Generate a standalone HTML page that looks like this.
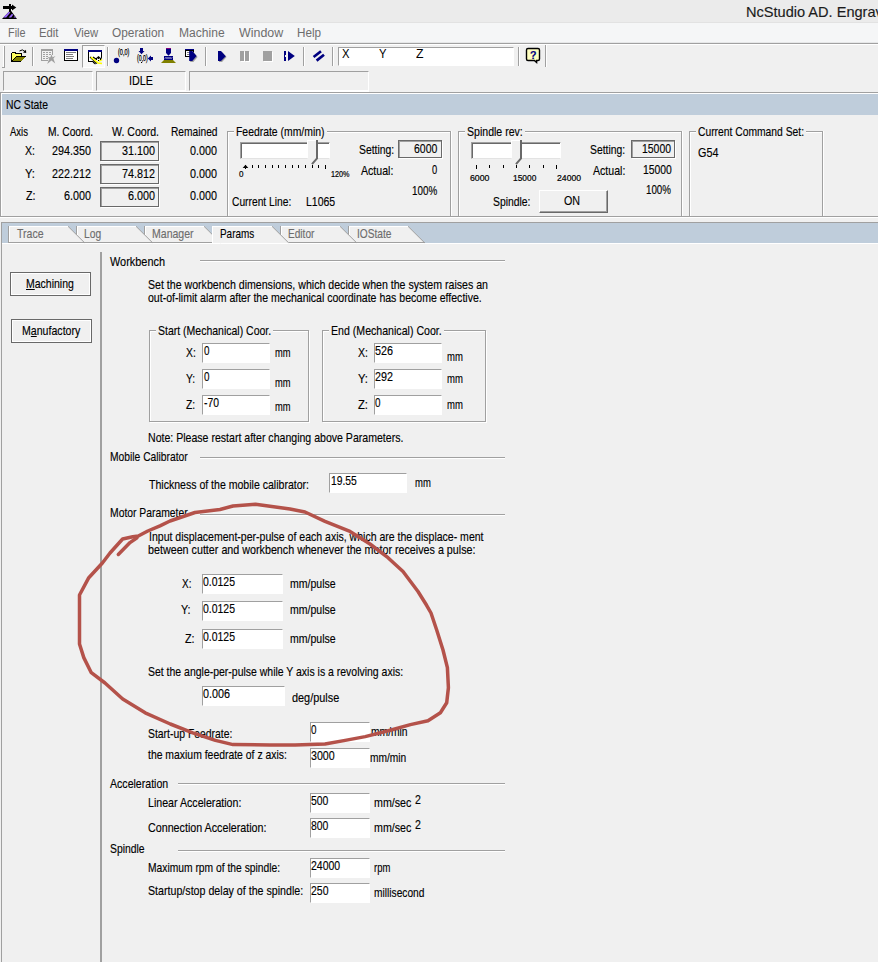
<!DOCTYPE html>
<html lang="en"><head><meta charset="utf-8"><title>NcStudio AD. Engraving</title>
<style>
html,body{margin:0;padding:0;}
body{background:#f0f0f0;width:878px;height:962px;overflow:hidden;font-family:"Liberation Sans",sans-serif;}
#app{position:relative;width:878px;height:962px;overflow:hidden;background:#f0f0f0;}
#app div,#app svg{position:absolute;box-sizing:border-box;}
.t{-webkit-text-stroke:0.15px currentColor;position:absolute;white-space:pre;line-height:1;font-size:13px;color:#000;transform-origin:0 0;display:block;}
.t u{text-decoration:underline;text-underline-offset:1px;}
.titlebar{background:#ebebeb;}
.menubar{background:#f5f6f7;}
.bar{background:#bfcddb;}
.g{background:#a0a0a0;}
.w{background:#fff;}
.sunk{border:1px solid;border-color:#a0a0a0 #fff #fff #a0a0a0;}
.edit{background:#fff;border:1px solid;border-color:#a0a0a0 #fff #fff #a0a0a0;}
.track{background:#fff;border:1px solid;border-color:#a0a0a0 #fff #e3e3e3 #a0a0a0;box-shadow:inset 1px 1px 0 #696969;}
.ro{border:1px solid #696969;box-shadow:1px 1px 0 #fff, inset 1px 1px 0 #a0a0a0;}
.btn{border:1px solid;border-color:#fff #696969 #696969 #fff;box-shadow:inset -1px -1px 0 #a0a0a0;}
.fbtn{border:1px solid #696969;box-shadow:inset 0 0 0 1px #fff;}
.grp{border:1px solid #a0a0a0;box-shadow:1px 1px 0 #fff, inset 1px 1px 0 #fff;}
.lblbg{background:#f0f0f0;}
.tab{background:#f0f0f0;}
.b{font-weight:bold;}
.sm{-webkit-text-stroke:0.2px #000;}
.px{-webkit-text-stroke:0.25px #000;}
.thin{-webkit-text-stroke:0;}

</style></head>
<body>
<div id="app">
<div class="titlebar" style="left:0px;top:0px;width:878px;height:22px;"></div>
<div class="menubar" style="left:0px;top:22px;width:878px;height:21px;"></div>
<div class="" style="left:0px;top:22px;width:878px;height:1px;background:#e2e2e2"></div>
<div class="" style="left:0px;top:42px;width:878px;height:1px;background:#e6e7e8"></div>
<div class="g" style="left:0px;top:43px;width:878px;height:1px;"></div>
<div class="w" style="left:0px;top:44px;width:878px;height:1px;"></div>
<div class="w" style="left:3px;top:46px;width:1px;height:21px;"></div>
<div class="g" style="left:4px;top:46px;width:1px;height:21px;"></div>
<div class="g" style="left:2px;top:67px;width:3px;height:1px;"></div>
<div class="g" style="left:32px;top:47px;width:1px;height:19px;"></div>
<div class="w" style="left:33px;top:47px;width:1px;height:19px;"></div>
<div class="g" style="left:107px;top:47px;width:1px;height:19px;"></div>
<div class="w" style="left:108px;top:47px;width:1px;height:19px;"></div>
<div class="g" style="left:205px;top:47px;width:1px;height:19px;"></div>
<div class="w" style="left:206px;top:47px;width:1px;height:19px;"></div>
<div class="g" style="left:303px;top:47px;width:1px;height:19px;"></div>
<div class="w" style="left:304px;top:47px;width:1px;height:19px;"></div>
<div class="g" style="left:332px;top:47px;width:1px;height:19px;"></div>
<div class="w" style="left:333px;top:47px;width:1px;height:19px;"></div>
<div class="g" style="left:518px;top:47px;width:1px;height:19px;"></div>
<div class="w" style="left:519px;top:47px;width:1px;height:19px;"></div>
<div class="g" style="left:545px;top:45px;width:1px;height:22px;"></div>
<div class="w" style="left:546px;top:45px;width:1px;height:22px;"></div>
<div class="" style="left:82px;top:45px;width:23px;height:23px;background:#f8f8f8;border:1px solid;border-color:#a0a0a0 #fff #fff #a0a0a0;"></div>
<div class="edit" style="left:338px;top:47px;width:176px;height:19px;"></div>
<div class="sunk" style="left:3px;top:71px;width:90px;height:20px;"></div>
<div class="sunk" style="left:96px;top:71px;width:90px;height:20px;"></div>
<div class="sunk" style="left:189px;top:71px;width:180px;height:20px;"></div>
<div class="w" style="left:3px;top:91px;width:366px;height:1px;"></div>
<div class="g" style="left:0px;top:92px;width:878px;height:1px;"></div>
<div class="w" style="left:1px;top:93px;width:878px;height:1px;"></div>
<div class="g" style="left:0px;top:92px;width:1px;height:125px;"></div>
<div class="w" style="left:1px;top:93px;width:1px;height:123px;"></div>
<div class="bar" style="left:2px;top:94px;width:876px;height:21px;"></div>
<div class="g" style="left:0px;top:216px;width:878px;height:1px;"></div>
<div class="w" style="left:0px;top:217px;width:878px;height:1px;"></div>
<div class="ro" style="left:100px;top:141px;width:59px;height:20px;"></div>
<div class="ro" style="left:100px;top:164px;width:59px;height:20px;"></div>
<div class="ro" style="left:100px;top:187px;width:59px;height:20px;"></div>
<div class="grp" style="left:227px;top:131px;width:224px;height:85px;border-bottom:none;box-shadow:1px 0 0 #fff, inset 1px 1px 0 #fff;"></div>
<div class="lblbg" style="left:234px;top:131px;width:92.5px;height:2px;"></div>
<div class="track" style="left:240px;top:142px;width:90px;height:17px;"></div>
<div class="ro" style="left:398px;top:140px;width:44px;height:18px;"></div>
<div class="grp" style="left:458px;top:131px;width:224px;height:85px;border-bottom:none;box-shadow:1px 0 0 #fff, inset 1px 1px 0 #fff;"></div>
<div class="lblbg" style="left:465.2px;top:131px;width:59.80000000000001px;height:2px;"></div>
<div class="track" style="left:471px;top:142px;width:90px;height:17px;"></div>
<div class="btn" style="left:539px;top:190px;width:69px;height:23px;"></div>
<div class="ro" style="left:631px;top:140px;width:44px;height:18px;"></div>
<div class="grp" style="left:689px;top:131px;width:134px;height:85px;border-bottom:none;box-shadow:1px 0 0 #fff, inset 1px 1px 0 #fff;"></div>
<div class="lblbg" style="left:695.6px;top:131px;width:110.0px;height:2px;"></div>
<div class="g" style="left:1px;top:222px;width:878px;height:1px;"></div>
<div class="g" style="left:1px;top:222px;width:1px;height:740px;"></div>
<div class="bar" style="left:2px;top:223px;width:876px;height:20px;"></div>
<div class="w" style="left:2px;top:243px;width:876px;height:1px;"></div>
<div class="g" style="left:100px;top:252px;width:2px;height:710px;"></div>
<div class="fbtn" style="left:10px;top:272px;width:81px;height:24px;"></div>
<div class="fbtn" style="left:11px;top:319px;width:81px;height:24px;"></div>
<div class="g" style="left:200px;top:260px;width:305px;height:1px;"></div>
<div class="w" style="left:200px;top:261px;width:305px;height:1px;"></div>
<div class="grp" style="left:149px;top:330px;width:160px;height:92px;"></div>
<div class="lblbg" style="left:156px;top:330px;width:117.19999999999999px;height:2px;"></div>
<div class="grp" style="left:322px;top:330px;width:164px;height:92px;"></div>
<div class="lblbg" style="left:329px;top:330px;width:114.69999999999999px;height:2px;"></div>
<div class="edit" style="left:202px;top:343px;width:68px;height:20px;"></div>
<div class="edit" style="left:202px;top:369px;width:68px;height:20px;"></div>
<div class="edit" style="left:202px;top:395px;width:68px;height:20px;"></div>
<div class="edit" style="left:374px;top:343px;width:68px;height:20px;"></div>
<div class="edit" style="left:374px;top:369px;width:68px;height:20px;"></div>
<div class="edit" style="left:374px;top:395px;width:68px;height:20px;"></div>
<div class="g" style="left:200px;top:457px;width:305px;height:1px;"></div>
<div class="w" style="left:200px;top:458px;width:305px;height:1px;"></div>
<div class="edit" style="left:329px;top:473px;width:78px;height:20px;"></div>
<div class="g" style="left:200px;top:514px;width:305px;height:1px;"></div>
<div class="w" style="left:200px;top:515px;width:305px;height:1px;"></div>
<div class="edit" style="left:202px;top:574px;width:81px;height:20px;"></div>
<div class="edit" style="left:202px;top:601px;width:81px;height:20px;"></div>
<div class="edit" style="left:202px;top:629px;width:81px;height:20px;"></div>
<div class="edit" style="left:202px;top:686px;width:83px;height:20px;"></div>
<div class="edit" style="left:310px;top:722px;width:60px;height:20px;"></div>
<div class="edit" style="left:310px;top:748px;width:60px;height:20px;"></div>
<div class="g" style="left:178px;top:783px;width:327px;height:1px;"></div>
<div class="w" style="left:178px;top:784px;width:327px;height:1px;"></div>
<div class="edit" style="left:310px;top:793px;width:60px;height:20px;"></div>
<div class="edit" style="left:310px;top:818px;width:60px;height:20px;"></div>
<div class="g" style="left:178px;top:850px;width:327px;height:1px;"></div>
<div class="w" style="left:178px;top:851px;width:327px;height:1px;"></div>
<div class="edit" style="left:310px;top:858px;width:60px;height:20px;"></div>
<div class="edit" style="left:310px;top:883px;width:60px;height:20px;"></div>
<svg width="878" height="962" viewBox="0 0 878 962" style="left:0;top:0;pointer-events:none">
<g shape-rendering="crispEdges">
<g id="appicon"><rect x="3" y="6" width="10" height="3" fill="#000"/><polygon points="12,4.5 16.3,7.5 12,10.5" fill="#000" shape-rendering="auto"/><rect x="9" y="4" width="2" height="8" fill="#000"/><polygon points="2,19 9.5,11 11.2,11 17,19" fill="#000" shape-rendering="auto"/><polygon points="3.2,17.6 9,11.8 10.3,12.4 6.2,17.6" fill="#9966ff" shape-rendering="auto"/><polygon points="8.6,17.6 12,13.8 13.2,14.8 11.2,17.6" fill="#9966ff" shape-rendering="auto"/><polygon points="13.6,17.6 14.9,16 16,17.6" fill="#9966ff" shape-rendering="auto"/></g>
<g id="ic-open"><polygon points="11,62 11,53 12,52 15,52 16,53 22,53 22,56 26,56 21,62" fill="#000"/><polygon points="12,61 12,53.2 15,53.2 16,54.2 21,54.2 21,56 16,56" fill="#ffff60"/><polygon points="13,61 16.2,57 25,57 21,61" fill="#808000"/><path d="M19.5,51 Q22.5,48.5 25,51.5" fill="none" stroke="#000" stroke-width="1" shape-rendering="auto"/><polygon points="23,52.5 26.2,53 26,49.8" fill="#000" shape-rendering="auto"/></g>
<g id="ic-grid"><rect x="41" y="49" width="12" height="2" fill="#a0a0a0"/><rect x="41" y="49" width="1" height="12" fill="#a0a0a0"/><rect x="52" y="49" width="1" height="6" fill="#a0a0a0"/><rect x="41" y="60" width="7" height="1" fill="#a0a0a0"/><rect x="43" y="52" width="2" height="1" fill="#a0a0a0"/><rect x="46" y="52" width="2" height="1" fill="#a0a0a0"/><rect x="49" y="52" width="2" height="1" fill="#a0a0a0"/><rect x="43" y="54" width="2" height="1" fill="#a0a0a0"/><rect x="46" y="54" width="2" height="1" fill="#a0a0a0"/><rect x="49" y="54" width="2" height="1" fill="#a0a0a0"/><rect x="43" y="56" width="2" height="1" fill="#a0a0a0"/><rect x="46" y="56" width="2" height="1" fill="#a0a0a0"/><rect x="43" y="58" width="2" height="1" fill="#a0a0a0"/><rect x="46" y="58" width="2" height="1" fill="#a0a0a0"/><polygon points="51.5,54.5 52.6,57.2 55.5,56 53.4,58.6 55.2,63.5 51.5,60.6 47.2,64 49.2,58.8 47.5,57.2 50.4,57.2" fill="#a0a0a0" shape-rendering="auto"/></g>
<g id="ic-win"><rect x="64" y="49" width="14" height="12" fill="#000"/><rect x="65" y="51" width="12" height="9" fill="#fff"/><rect x="64" y="49" width="14" height="2" fill="#000080"/><rect x="66" y="52" width="10" height="1" fill="#808080"/><rect x="66" y="54" width="7" height="1" fill="#808080"/><rect x="66" y="56" width="8" height="1" fill="#808080"/><rect x="66" y="58" width="7" height="1" fill="#808080"/></g>
<g id="ic-win2"><rect x="88" y="50" width="14" height="12" fill="#000"/><rect x="89" y="52" width="12" height="9" fill="#fff"/><rect x="88" y="50" width="14" height="2" fill="#000080"/><polygon points="90,57 92,56.5 96,59 98,57 101,57.5 102.5,60 102,64 98,64 95,63 93,61" fill="#f0f0f0" shape-rendering="auto"/><path d="M90,57 L97,63.5 M93,57 L96,59 L98.5,56.8 L101.5,59.5 M93,62 L95.5,64" stroke="#000" stroke-width="1.1" fill="none" shape-rendering="auto"/><path d="M91,57.2 L98,63 L102,63.5 M99,61 L102,59.5" stroke="#ffff00" stroke-width="1.6" fill="none" shape-rendering="auto"/><path d="M96,59.5 l1,0 m1,-1 l1,0 m1,1 l1,0 m-3,1 l1,0 m-3,-1 l0,0" stroke="#000" stroke-width="1" fill="none"/></g>
<g id="ic-origin"><circle cx="116.5" cy="60.5" r="2.7" fill="#000080" shape-rendering="auto"/></g>
<g id="ic-origin2"><rect x="140" y="48" width="3" height="3" fill="#000080"/><polygon points="138.5,51 144.5,51 141.5,54.3" fill="#000080" shape-rendering="auto"/><rect x="150.5" y="57" width="2.5" height="3" fill="#000080"/><polygon points="151,55.5 151,61.5 147.8,58.5" fill="#000080" shape-rendering="auto"/><rect x="141" y="62" width="1" height="1" fill="#000"/></g>
<g id="ic-tool"><rect x="166" y="48" width="5" height="1" fill="#800080"/><rect x="166" y="49" width="5" height="4" fill="#000080"/><polygon points="166,53 171,53 168.5,55.8" fill="#000080" shape-rendering="auto"/><rect x="164" y="56" width="9" height="4" fill="#000080"/><path d="M165,58.5 l1,-1 l1,1 l1,-1 l1,1 l1,-1 l1,1 l1,-1" stroke="#fff" stroke-width="0.9" fill="none" shape-rendering="auto"/><polygon points="164,60 173,60 176,63 161,63" fill="#808000" shape-rendering="auto"/></g>
<g id="ic-send"><rect x="185" y="49" width="9" height="8" fill="#000"/><rect x="186" y="51" width="7" height="5" fill="#fff"/><rect x="185" y="49" width="9" height="1" fill="#000080"/><rect x="187" y="52" width="3" height="1" fill="#808080"/><rect x="187" y="54" width="3" height="1" fill="#808080"/><polygon points="190.2,52 193.3,52 197.6,57 193.3,62 190.2,62" fill="#a0a0a0" shape-rendering="auto"/><polygon points="189.2,51 192.3,51 196.6,56 192.3,61 189.2,61" fill="#000080" shape-rendering="auto"/></g>
<g id="ic-play"><polygon points="219,52 222,52 226.6,57 222,62 219,62" fill="#a0a0a0" shape-rendering="auto"/><polygon points="218,51 221,51 225.8,56.2 221,61 218,61" fill="#000080" shape-rendering="auto"/></g>
<g id="ic-pause"><rect x="241" y="52" width="4" height="10" fill="#fff"/><rect x="246" y="52" width="4" height="10" fill="#fff"/><rect x="240" y="51" width="4" height="10" fill="#a0a0a0"/><rect x="245" y="51" width="4" height="10" fill="#a0a0a0"/></g>
<g id="ic-stop"><rect x="264" y="52" width="9" height="10" fill="#fff"/><rect x="263" y="51" width="9" height="10" fill="#a0a0a0"/></g>
<g id="ic-resume"><rect x="284" y="51" width="2" height="10" fill="#000080"/><rect x="285" y="55" width="1" height="2" fill="#f0f0f0"/><polygon points="288,51 294.8,56 288,61" fill="#000080" shape-rendering="auto"/></g>
<g id="ic-reset"><path d="M313.6,57 L321,51.2 M316.6,60.6 L324,54.8" stroke="#000080" stroke-width="2.7" fill="none" shape-rendering="auto"/></g>
<g id="ic-help"><path d="M528,48.5 h10 q1.5,0 1.5,1.5 v9 q0,1.5 -1.5,1.5 h-1.4 v1.9 l-2.3,-1.9 h-6.3 q-1.5,0 -1.5,-1.5 v-9 q0,-1.5 1.5,-1.5 z" fill="#ffffc0" stroke="#000" stroke-width="1.4" shape-rendering="auto"/></g>
<g id="sliders"><polygon points="307,140 318,140 318,158 312,164 307,158" fill="#f0f0f0" shape-rendering="auto"/><rect x="307" y="140" width="1" height="18" fill="#fff"/><rect x="307" y="140" width="10" height="1" fill="#fff"/><path d="M317,140 V158.4 L312,164.2" stroke="#696969" stroke-width="2" fill="none" shape-rendering="auto"/><rect x="245" y="165" width="1" height="4" fill="#000"/><rect x="252" y="165" width="1" height="3" fill="#000"/><rect x="258" y="165" width="1" height="3" fill="#000"/><rect x="265" y="165" width="1" height="3" fill="#000"/><rect x="272" y="165" width="1" height="3" fill="#000"/><rect x="278" y="165" width="1" height="3" fill="#000"/><rect x="285" y="165" width="1" height="3" fill="#000"/><rect x="292" y="165" width="1" height="3" fill="#000"/><rect x="298" y="165" width="1" height="3" fill="#000"/><rect x="305" y="165" width="1" height="3" fill="#000"/><rect x="312" y="165" width="1" height="3" fill="#000"/><rect x="318" y="165" width="1" height="3" fill="#000"/><rect x="325" y="165" width="1" height="4" fill="#000"/><polygon points="242.7,168 245.5,164.8 248.3,168" fill="#000" shape-rendering="auto"/><rect x="245" y="168" width="1" height="1" fill="#000"/><polygon points="511,140 522,140 522,158 516,164 511,158" fill="#f0f0f0" shape-rendering="auto"/><rect x="511" y="140" width="1" height="18" fill="#fff"/><rect x="511" y="140" width="10" height="1" fill="#fff"/><path d="M521,140 V158.4 L516,164.2" stroke="#696969" stroke-width="2" fill="none" shape-rendering="auto"/><rect x="476" y="165" width="1" height="4" fill="#000"/><rect x="489" y="165" width="1" height="3" fill="#000"/><rect x="503" y="165" width="1" height="3" fill="#000"/><rect x="516" y="165" width="1" height="3" fill="#000"/><rect x="529" y="165" width="1" height="3" fill="#000"/><rect x="543" y="165" width="1" height="3" fill="#000"/><rect x="556" y="165" width="1" height="4" fill="#000"/></g>
<g id="tabs"><polygon points="348,226 408,226 424.5,242.5 424.5,243 348,243" fill="#f0f0f0" shape-rendering="auto"/><rect x="348" y="226" width="1" height="17" fill="#a0a0a0"/><rect x="349" y="226" width="1" height="16" fill="#fff"/><rect x="349" y="226" width="59" height="1" fill="#fff"/><rect x="348" y="242" width="77" height="1" fill="#a0a0a0"/><path d="M408,226.3 L424.3,242.5" stroke="#959595" stroke-width="0.9" fill="none" shape-rendering="auto"/><polygon points="280,226 340,226 356.5,242.5 356.5,243 280,243" fill="#f0f0f0" shape-rendering="auto"/><rect x="280" y="226" width="1" height="17" fill="#a0a0a0"/><rect x="281" y="226" width="1" height="16" fill="#fff"/><rect x="281" y="226" width="59" height="1" fill="#fff"/><rect x="280" y="242" width="77" height="1" fill="#a0a0a0"/><path d="M340,226.3 L356.3,242.5" stroke="#959595" stroke-width="0.9" fill="none" shape-rendering="auto"/><polygon points="144,226 204,226 220.5,242.5 220.5,243 144,243" fill="#f0f0f0" shape-rendering="auto"/><rect x="144" y="226" width="1" height="17" fill="#a0a0a0"/><rect x="145" y="226" width="1" height="16" fill="#fff"/><rect x="145" y="226" width="59" height="1" fill="#fff"/><rect x="144" y="242" width="77" height="1" fill="#a0a0a0"/><path d="M204,226.3 L220.3,242.5" stroke="#959595" stroke-width="0.9" fill="none" shape-rendering="auto"/><polygon points="76,226 136,226 152.5,242.5 152.5,243 76,243" fill="#f0f0f0" shape-rendering="auto"/><rect x="76" y="226" width="1" height="17" fill="#a0a0a0"/><rect x="77" y="226" width="1" height="16" fill="#fff"/><rect x="77" y="226" width="59" height="1" fill="#fff"/><rect x="76" y="242" width="77" height="1" fill="#a0a0a0"/><path d="M136,226.3 L152.3,242.5" stroke="#959595" stroke-width="0.9" fill="none" shape-rendering="auto"/><polygon points="8,226 68,226 84.5,242.5 84.5,243 8,243" fill="#f0f0f0" shape-rendering="auto"/><rect x="8" y="226" width="1" height="17" fill="#a0a0a0"/><rect x="9" y="226" width="1" height="16" fill="#fff"/><rect x="9" y="226" width="59" height="1" fill="#fff"/><rect x="8" y="242" width="77" height="1" fill="#a0a0a0"/><path d="M68,226.3 L84.3,242.5" stroke="#959595" stroke-width="0.9" fill="none" shape-rendering="auto"/><polygon points="212,226 272,226 288.5,242.5 288.5,243 212,243" fill="#f0f0f0" shape-rendering="auto"/><rect x="212" y="226" width="1" height="17" fill="#fff"/><rect x="212" y="226" width="60" height="1" fill="#fff"/><path d="M272,226.3 L288.3,242.5" stroke="#959595" stroke-width="0.9" fill="none" shape-rendering="auto"/></g>
</g>
</svg>
<span class="t title" id="t0" style="left:746.2px;top:4.30px;font-size:15px;color:#1b1b1b;transform:scaleX(0.9713)">NcStudio AD. Engraving</span>
<span class="t thin" id="t1" style="left:7.5px;top:26.64px;font-size:12px;color:#6d6d6d;transform:scaleX(0.9047)">File</span>
<span class="t thin" id="t2" style="left:39.3px;top:26.64px;font-size:12px;color:#6d6d6d;transform:scaleX(0.9426)">Edit</span>
<span class="t thin" id="t3" style="left:73.5px;top:26.64px;font-size:12px;color:#6d6d6d;transform:scaleX(0.9381)">View</span>
<span class="t thin" id="t4" style="left:112.3px;top:26.64px;font-size:12px;color:#6d6d6d;transform:scaleX(0.9886)">Operation</span>
<span class="t thin" id="t5" style="left:179.4px;top:26.64px;font-size:12px;color:#6d6d6d;transform:scaleX(1.0053)">Machine</span>
<span class="t thin" id="t6" style="left:239.0px;top:26.64px;font-size:12px;color:#6d6d6d;transform:scaleX(1.0354)">Window</span>
<span class="t thin" id="t7" style="left:297.2px;top:26.64px;font-size:12px;color:#6d6d6d;transform:scaleX(0.9762)">Help</span>
<span class="t thin" id="t8" style="left:341.8px;top:48.42px;font-size:12.5px;transform:scaleX(0.8989)">X</span>
<span class="t thin" id="t9" style="left:379.0px;top:48.42px;font-size:12.5px;transform:scaleX(0.8989)">Y</span>
<span class="t thin" id="t10" style="left:415.8px;top:48.42px;font-size:12.5px;transform:scaleX(0.9816)">Z</span>
<span class="t px" id="t11" style="left:117.8px;top:48.20px;font-size:8.5px;transform:scaleX(0.6520)">(0,0)</span>
<span class="t px" id="t12" style="left:137.0px;top:54.00px;font-size:8.5px;transform:scaleX(0.6120)">(0,0)</span>
<span class="t b" id="t13" style="left:529.5px;top:49.89px;font-size:11px;color:#000080;transform:scaleX(0.9652)">?</span>
<span class="t " id="t14" style="left:35.0px;top:74.00px;transform:scaleX(0.8042)">JOG</span>
<span class="t " id="t15" style="left:129.0px;top:74.00px;transform:scaleX(0.8303)">IDLE</span>
<span class="t " id="t16" style="left:6.0px;top:98.00px;transform:scaleX(0.7962)">NC State</span>
<span class="t " id="t17" style="left:10.0px;top:124.70px;transform:scaleX(0.7328)">Axis</span>
<span class="t " id="t18" style="left:47.5px;top:124.70px;transform:scaleX(0.7884)">M. Coord.</span>
<span class="t " id="t19" style="left:112.0px;top:124.70px;transform:scaleX(0.8132)">W. Coord.</span>
<span class="t " id="t20" style="left:170.5px;top:124.70px;transform:scaleX(0.7846)">Remained</span>
<span class="t " id="t21" style="left:24.5px;top:143.50px;transform:scaleX(0.8132)">X:</span>
<span class="t " id="t22" style="left:52.0px;top:143.50px;transform:scaleX(0.8298)">294.350</span>
<span class="t " id="t23" style="left:122.0px;top:143.50px;transform:scaleX(0.8299)">31.100</span>
<span class="t " id="t24" style="left:190.0px;top:143.50px;transform:scaleX(0.8296)">0.000</span>
<span class="t " id="t25" style="left:24.5px;top:166.60px;transform:scaleX(0.8637)">Y:</span>
<span class="t " id="t26" style="left:52.0px;top:166.60px;transform:scaleX(0.8298)">222.212</span>
<span class="t " id="t27" style="left:122.0px;top:166.60px;transform:scaleX(0.8299)">74.812</span>
<span class="t " id="t28" style="left:190.0px;top:166.60px;transform:scaleX(0.8296)">0.000</span>
<span class="t " id="t29" style="left:25.5px;top:189.00px;transform:scaleX(0.8216)">Z:</span>
<span class="t " id="t30" style="left:64.0px;top:189.00px;transform:scaleX(0.8296)">6.000</span>
<span class="t " id="t31" style="left:128.0px;top:189.00px;transform:scaleX(0.8296)">6.000</span>
<span class="t " id="t32" style="left:190.0px;top:189.00px;transform:scaleX(0.8296)">0.000</span>
<span class="t " id="t33" style="left:236.0px;top:124.70px;transform:scaleX(0.8007)">Feedrate (mm/min)</span>
<span class="t sm" id="t34" style="left:239.0px;top:169.72px;font-size:8.6px;transform:scaleX(0.9412)">0</span>
<span class="t sm" id="t35" style="left:330.8px;top:169.72px;font-size:8.6px;transform:scaleX(0.8415)">120%</span>
<span class="t " id="t36" style="left:232.0px;top:194.60px;transform:scaleX(0.7890)">Current Line:</span>
<span class="t " id="t37" style="left:305.6px;top:194.60px;transform:scaleX(0.8076)">L1065</span>
<span class="t " id="t38" style="left:359.0px;top:142.50px;transform:scaleX(0.7983)">Setting:</span>
<span class="t " id="t39" style="left:414.1px;top:142.00px;transform:scaleX(0.8056)">6000</span>
<span class="t " id="t40" style="left:361.0px;top:163.50px;transform:scaleX(0.8151)">Actual:</span>
<span class="t " id="t41" style="left:432.2px;top:163.00px;transform:scaleX(0.7188)">0</span>
<span class="t " id="t42" style="left:411.8px;top:183.60px;transform:scaleX(0.7579)">100%</span>
<span class="t " id="t43" style="left:467.2px;top:124.70px;transform:scaleX(0.8127)">Spindle rev:</span>
<span class="t sm" id="t44" style="left:469.5px;top:173.72px;font-size:8.6px;transform:scaleX(1.0196)">6000</span>
<span class="t sm" id="t45" style="left:512.7px;top:173.72px;font-size:8.6px;transform:scaleX(0.9746)">15000</span>
<span class="t sm" id="t46" style="left:556.9px;top:173.72px;font-size:8.6px;transform:scaleX(1.0081)">24000</span>
<span class="t " id="t47" style="left:493.0px;top:194.60px;transform:scaleX(0.7981)">Spindle:</span>
<span class="t " id="t48" style="left:564.3px;top:194.00px;transform:scaleX(0.8256)">ON</span>
<span class="t " id="t49" style="left:590.3px;top:142.50px;transform:scaleX(0.7960)">Setting:</span>
<span class="t " id="t50" style="left:642.1px;top:142.00px;transform:scaleX(0.8021)">15000</span>
<span class="t " id="t51" style="left:593.0px;top:163.50px;transform:scaleX(0.8151)">Actual:</span>
<span class="t " id="t52" style="left:643.0px;top:163.00px;transform:scaleX(0.7993)">15000</span>
<span class="t " id="t53" style="left:646.1px;top:183.00px;transform:scaleX(0.7519)">100%</span>
<span class="t " id="t54" style="left:697.6px;top:124.70px;transform:scaleX(0.7930)">Current Command Set:</span>
<span class="t " id="t55" style="left:697.6px;top:145.50px;transform:scaleX(0.8300)">G54</span>
<span class="t " id="t56" style="left:16.5px;top:226.80px;color:#6d6d6d;transform:scaleX(0.8092)">Trace</span>
<span class="t " id="t57" style="left:84.2px;top:226.80px;color:#6d6d6d;transform:scaleX(0.7879)">Log</span>
<span class="t " id="t58" style="left:152.2px;top:226.80px;color:#6d6d6d;transform:scaleX(0.8107)">Manager</span>
<span class="t " id="t59" style="left:220.2px;top:226.80px;transform:scaleX(0.7634)">Params</span>
<span class="t " id="t60" style="left:288.2px;top:226.80px;color:#6d6d6d;transform:scaleX(0.7772)">Editor</span>
<span class="t " id="t61" style="left:356.5px;top:226.80px;color:#6d6d6d;transform:scaleX(0.7827)">IOState</span>
<span class="t " id="t62" style="left:26.3px;top:277.30px;transform:scaleX(0.8080)"><u>M</u>achining</span>
<span class="t " id="t63" style="left:22.0px;top:324.00px;transform:scaleX(0.8147)">M<u>a</u>nufactory</span>
<span class="t " id="t64" style="left:110.0px;top:255.00px;transform:scaleX(0.8395)">Workbench</span>
<span class="t " id="t65" style="left:148.0px;top:278.00px;transform:scaleX(0.8154)">Set the workbench dimensions, which decide when the system raises an</span>
<span class="t " id="t66" style="left:148.0px;top:291.00px;transform:scaleX(0.8107)">out-of-limit alarm after the mechanical coordinate has become effective.</span>
<span class="t " id="t67" style="left:158.0px;top:323.80px;transform:scaleX(0.8076)">Start (Mechanical) Coor.</span>
<span class="t " id="t68" style="left:331.0px;top:323.80px;transform:scaleX(0.8149)">End (Mechanical) Coor.</span>
<span class="t " id="t69" style="left:185.5px;top:346.00px;transform:scaleX(0.7970)">X:</span>
<span class="t " id="t70" style="left:203.5px;top:344.30px;transform:scaleX(0.7603)">0</span>
<span class="t " id="t71" style="left:274.7px;top:346.00px;transform:scaleX(0.7152)">mm</span>
<span class="t " id="t72" style="left:186.0px;top:372.00px;transform:scaleX(0.7946)">Y:</span>
<span class="t " id="t73" style="left:203.5px;top:370.00px;transform:scaleX(0.7603)">0</span>
<span class="t " id="t74" style="left:274.7px;top:375.60px;transform:scaleX(0.7152)">mm</span>
<span class="t " id="t75" style="left:186.0px;top:398.00px;transform:scaleX(0.7957)">Z:</span>
<span class="t " id="t76" style="left:203.5px;top:396.00px;transform:scaleX(0.7980)">-70</span>
<span class="t " id="t77" style="left:274.7px;top:399.80px;transform:scaleX(0.7152)">mm</span>
<span class="t " id="t78" style="left:357.8px;top:346.00px;transform:scaleX(0.8132)">X:</span>
<span class="t " id="t79" style="left:375.3px;top:344.00px;transform:scaleX(0.8294)">526</span>
<span class="t " id="t80" style="left:447.4px;top:350.00px;transform:scaleX(0.7337)">mm</span>
<span class="t " id="t81" style="left:357.8px;top:372.00px;transform:scaleX(0.8637)">Y:</span>
<span class="t " id="t82" style="left:375.3px;top:370.00px;transform:scaleX(0.8294)">292</span>
<span class="t " id="t83" style="left:447.4px;top:372.00px;transform:scaleX(0.7337)">mm</span>
<span class="t " id="t84" style="left:357.8px;top:398.00px;transform:scaleX(0.8649)">Z:</span>
<span class="t " id="t85" style="left:375.3px;top:396.00px;transform:scaleX(0.7603)">0</span>
<span class="t " id="t86" style="left:447.4px;top:398.00px;transform:scaleX(0.7337)">mm</span>
<span class="t " id="t87" style="left:148.0px;top:430.90px;transform:scaleX(0.8125)">Note: Please restart after changing above Parameters.</span>
<span class="t " id="t88" style="left:110.0px;top:449.60px;transform:scaleX(0.7907)">Mobile Calibrator</span>
<span class="t " id="t89" style="left:148.5px;top:478.00px;transform:scaleX(0.8111)">Thickness of the mobile calibrator:</span>
<span class="t " id="t90" style="left:331.4px;top:473.60px;transform:scaleX(0.7927)">19.55</span>
<span class="t " id="t91" style="left:414.6px;top:475.90px;transform:scaleX(0.7291)">mm</span>
<span class="t " id="t92" style="left:110.0px;top:505.50px;transform:scaleX(0.7965)">Motor Parameter</span>
<span class="t " id="t93" style="left:148.5px;top:530.00px;transform:scaleX(0.8093)">Input displacement-per-pulse of each axis, which are the displace- ment</span>
<span class="t " id="t94" style="left:148.0px;top:543.00px;transform:scaleX(0.8255)">between cutter and workbench whenever the motor receives a pulse:</span>
<span class="t " id="t95" style="left:182.0px;top:576.60px;transform:scaleX(0.7644)">X:</span>
<span class="t " id="t96" style="left:203.4px;top:574.80px;transform:scaleX(0.8047)">0.0125</span>
<span class="t " id="t97" style="left:289.6px;top:576.60px;transform:scaleX(0.8109)">mm/pulse</span>
<span class="t " id="t98" style="left:181.0px;top:602.60px;transform:scaleX(0.8291)">Y:</span>
<span class="t " id="t99" style="left:203.4px;top:602.00px;transform:scaleX(0.8047)">0.0125</span>
<span class="t " id="t100" style="left:289.6px;top:602.60px;transform:scaleX(0.8109)">mm/pulse</span>
<span class="t " id="t101" style="left:185.0px;top:631.70px;transform:scaleX(0.8303)">Z:</span>
<span class="t " id="t102" style="left:203.4px;top:629.90px;transform:scaleX(0.8047)">0.0125</span>
<span class="t " id="t103" style="left:289.6px;top:631.70px;transform:scaleX(0.8109)">mm/pulse</span>
<span class="t " id="t104" style="left:148.2px;top:665.00px;transform:scaleX(0.8054)">Set the angle-per-pulse while Y axis is a revolving axis:</span>
<span class="t " id="t105" style="left:203.4px;top:686.70px;transform:scaleX(0.8296)">0.006</span>
<span class="t " id="t106" style="left:292.0px;top:691.00px;transform:scaleX(0.8370)">deg/pulse</span>
<span class="t " id="t107" style="left:148.2px;top:726.70px;transform:scaleX(0.8000)">Start-up Feedrate:</span>
<span class="t " id="t108" style="left:311.4px;top:723.00px;transform:scaleX(0.7603)">0</span>
<span class="t " id="t109" style="left:370.6px;top:724.60px;transform:scaleX(0.7919)">mm/min</span>
<span class="t " id="t110" style="left:147.8px;top:748.00px;transform:scaleX(0.8009)">the maxium feedrate of z axis:</span>
<span class="t " id="t111" style="left:311.1px;top:749.00px;transform:scaleX(0.8194)">3000</span>
<span class="t " id="t112" style="left:369.9px;top:751.00px;transform:scaleX(0.7854)">mm/min</span>
<span class="t " id="t113" style="left:110.0px;top:776.70px;transform:scaleX(0.8135)">Acceleration</span>
<span class="t " id="t114" style="left:148.2px;top:795.50px;transform:scaleX(0.8180)">Linear Acceleration:</span>
<span class="t " id="t115" style="left:311.1px;top:794.00px;transform:scaleX(0.8017)">500</span>
<span class="t " id="t116" style="left:373.7px;top:796.00px;transform:scaleX(0.8198)">mm/sec</span>
<span class="t " id="t117" style="left:415.2px;top:793.00px;transform:scaleX(0.8156)">2</span>
<span class="t " id="t118" style="left:148.2px;top:820.50px;transform:scaleX(0.8240)">Connection Acceleration:</span>
<span class="t " id="t119" style="left:311.1px;top:819.00px;transform:scaleX(0.8017)">800</span>
<span class="t " id="t120" style="left:373.7px;top:821.00px;transform:scaleX(0.8198)">mm/sec</span>
<span class="t " id="t121" style="left:415.2px;top:818.00px;transform:scaleX(0.8156)">2</span>
<span class="t " id="t122" style="left:110.0px;top:841.80px;transform:scaleX(0.7977)">Spindle</span>
<span class="t " id="t123" style="left:148.4px;top:861.00px;transform:scaleX(0.7915)">Maximum rpm of the spindle:</span>
<span class="t " id="t124" style="left:311.1px;top:859.00px;transform:scaleX(0.8076)">24000</span>
<span class="t " id="t125" style="left:373.7px;top:861.00px;transform:scaleX(0.7280)">rpm</span>
<span class="t " id="t126" style="left:148.4px;top:884.00px;transform:scaleX(0.8196)">Startup/stop delay of the spindle:</span>
<span class="t " id="t127" style="left:311.1px;top:884.00px;transform:scaleX(0.8063)">250</span>
<span class="t " id="t128" style="left:373.7px;top:886.00px;transform:scaleX(0.7837)">millisecond</span>
<svg width="878" height="962" viewBox="0 0 878 962" style="left:0;top:0;pointer-events:none">
<path id="scribble" d="M138.3,536 L147.8,531 L160,525.8 L170,521 L195,512.5 L220,509.5 L233,506 L255.5,504.3 L270,506.3 L290,509 L305,512 L325,521.3 L350,531.4 L370,544 L388,557.7 L403,571.5 L418,591.5 L426.6,605.3 L431,613 L436.7,630 L443,650 L447.4,667.7 L448.4,687.7 L446.7,702.8 L440.4,712.8 L428,720.8 L410.4,724.6 L390.3,730.3 L365.2,736.6 L345.2,740.4 L325,744 L295,745 L270,745 L233,744.6 L215.4,740.4 L192.8,732.8 L170.3,724 L145.2,712.8 L122.7,699 L105,683 L91.3,672.7 L83.8,657.6 L79.5,644 L79.5,620 L79.5,595 L88.8,577.7 L102.6,562.7 L110,553 L122.6,539 L132.8,536.7 L138.3,536" fill="none" stroke="#b4524a" stroke-width="3.5" stroke-linejoin="round" stroke-linecap="round"/>
<path d="M118.3,554.5 L130,542.6 L137,537.8" fill="none" stroke="#b4524a" stroke-width="3.5" stroke-linejoin="round" stroke-linecap="round"/>
</svg>
</div>
</body></html>
